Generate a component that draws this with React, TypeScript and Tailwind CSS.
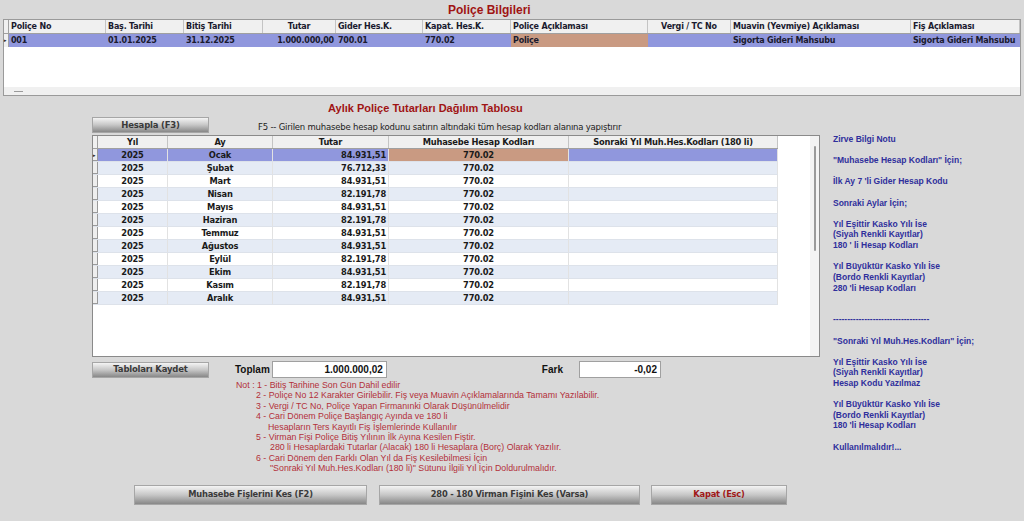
import React from 'react';

const tahoma = "font-['DejaVu_Sans',sans-serif]";
const arial = "font-['Liberation_Sans',Arial,sans-serif]";

const topCols = [
  { label: 'Poliçe No', w: 'w-[97px]', head: 'text-left', cell: 'text-left', value: '001', bg: 'bg-[#9097dd]' },
  { label: 'Baş. Tarihi', w: 'w-[78px]', head: 'text-left', cell: 'text-left', value: '01.01.2025', bg: 'bg-[#9097dd]' },
  { label: 'Bitiş Tarihi', w: 'w-[79px]', head: 'text-left', cell: 'text-left', value: '31.12.2025', bg: 'bg-[#9097dd]' },
  { label: 'Tutar', w: 'w-[73px]', head: 'text-center', cell: 'text-right', value: '1.000.000,00', bg: 'bg-[#9097dd]' },
  { label: 'Gider Hes.K.', w: 'w-[87px]', head: 'text-left', cell: 'text-left', value: '700.01', bg: 'bg-[#9097dd]' },
  { label: 'Kapat. Hes.K.', w: 'w-[88px]', head: 'text-left', cell: 'text-left', value: '770.02', bg: 'bg-[#9097dd]' },
  { label: 'Poliçe Açıklaması', w: 'w-[137px]', head: 'text-left', cell: 'text-left', value: 'Poliçe', bg: 'bg-[#c99a82]' },
  { label: 'Vergi / TC No', w: 'w-[83px]', head: 'text-center', cell: 'text-left', value: '', bg: 'bg-[#9097dd]' },
  { label: 'Muavin (Yevmiye) Açıklaması', w: 'w-[180px]', head: 'text-left', cell: 'text-left', value: 'Sigorta Gideri Mahsubu', bg: 'bg-[#9097dd]' },
  { label: 'Fiş Açıklaması', w: 'flex-1', head: 'text-left', cell: 'text-left', value: 'Sigorta Gideri Mahsubu', bg: 'bg-[#9097dd]' },
];

const months = [
  ['Ocak', '84.931,51'],
  ['Şubat', '76.712,33'],
  ['Mart', '84.931,51'],
  ['Nisan', '82.191,78'],
  ['Mayıs', '84.931,51'],
  ['Haziran', '82.191,78'],
  ['Temmuz', '84.931,51'],
  ['Ağustos', '84.931,51'],
  ['Eylül', '82.191,78'],
  ['Ekim', '84.931,51'],
  ['Kasım', '82.191,78'],
  ['Aralık', '84.931,51'],
];

const notes = [
  { text: 'Not : 1 - Bitiş Tarihine Son Gün Dahil edilir', pad: 'pl-0' },
  { text: '2 - Poliçe No 12 Karakter Girilebilir. Fiş veya Muavin Açıklamalarında Tamamı Yazılabilir.', pad: 'pl-[20px]' },
  { text: '3 - Vergi / TC No, Poliçe Yapan Firmanınki Olarak Düşünülmelidir', pad: 'pl-[20px]' },
  { text: '4 - Cari Dönem Poliçe Başlangıç Ayında ve 180 li', pad: 'pl-[20px]' },
  { text: 'Hesapların Ters Kayıtlı Fiş İşlemlerinde Kullanılır', pad: 'pl-[32px]' },
  { text: '5 - Virman Fişi Poliçe Bitiş Yılının İlk Ayına Kesilen Fiştir.', pad: 'pl-[20px]' },
  { text: '280 li Hesaplardaki Tutarlar (Alacak) 180 li Hesaplara (Borç) Olarak Yazılır.', pad: 'pl-[34px]' },
  { text: '6 - Cari Dönem den Farklı Olan Yıl da Fiş Kesilebilmesi İçin', pad: 'pl-[20px]' },
  { text: '"Sonraki Yıl Muh.Hes.Kodları (180 li)" Sütunu İlgili Yıl İçin Doldurulmalıdır.', pad: 'pl-[34px]' },
];

const info = [
  'Zirve Bilgi Notu',
  '',
  '"Muhasebe Hesap Kodları" İçin;',
  '',
  "İlk Ay 7 'li Gider Hesap Kodu",
  '',
  'Sonraki Aylar İçin;',
  '',
  'Yıl Eşittir Kasko Yılı İse',
  '(Siyah Renkli Kayıtlar)',
  "180 ' li Hesap Kodları",
  '',
  'Yıl Büyüktür Kasko Yılı İse',
  '(Bordo Renkli Kayıtlar)',
  "280 'li Hesap Kodları",
  '',
  '',
  '----------------------------------',
  '',
  '"Sonraki Yıl Muh.Hes.Kodları" İçin;',
  '',
  'Yıl Eşittir Kasko Yılı İse',
  '(Siyah Renkli Kayıtlar)',
  'Hesap Kodu Yazılmaz',
  '',
  'Yıl Büyüktür Kasko Yılı İse',
  '(Bordo Renkli Kayıtlar)',
  "180 'li Hesap Kodları",
  '',
  'Kullanılmalıdır!...',
];

function GrayButton({ label, className, red }: { label: string; className: string; red?: boolean }) {
  return (
    <button
      className={`${className} ${tahoma} flex items-center justify-center border border-[#a6a6a6] bg-gradient-to-b from-[#f4f4f4] via-[#c6c6c6] to-[#888888] font-bold tracking-[-0.2px] ${
        red ? 'text-[#a01818]' : 'text-[#3a3a3a]'
      }`}
    >
      {label}
    </button>
  );
}

export default function App() {
  return (
    <div className={`w-[1024px] h-[521px] overflow-hidden bg-[#d9d9d9] ${arial}`}>
      {/* header title */}
      <div className="h-[19px] pl-[448px] pt-[4px] text-[12px] leading-[13px] font-bold text-[#a01414]">
        Poliçe Bilgileri
      </div>

      {/* policy grid */}
      <div className={`mx-[3px] h-[77px] flex flex-col border border-[#9a9a9a] bg-white ${tahoma} text-[8px] font-bold tracking-[-0.2px] text-[#1a1a2e]`}>
        <div className="flex h-[14px] border-b border-[#a0a0a0] bg-[#f0f0f0]">
          <div className="w-[5px] border-r border-[#a0a0a0]" />
          {topCols.map((c) => (
            <div key={c.label} className={`${c.w} ${c.head} border-r border-[#c4c4c4] px-[2px] leading-[13px] whitespace-nowrap overflow-hidden`}>
              {c.label}
            </div>
          ))}
        </div>
        <div className="flex h-[13px]">
          <div className="w-[5px] border-r border-[#a0a0a0] bg-[#f0f0f0] text-[5px] leading-[13px] text-[#222]">▸</div>
          {topCols.map((c) => (
            <div key={c.label} className={`${c.w} ${c.cell} ${c.bg} px-[2px] leading-[13px] whitespace-nowrap overflow-hidden`}>
              {c.value}
            </div>
          ))}
        </div>
        <div className="flex-1" />
        <div className="h-[8px] bg-[#f0f0f0] flex items-center pl-[10px]">
          <div className="w-[9px] h-[1px] bg-[#9a9a9a]" />
        </div>
      </div>

      <div className="flex">
        {/* left column */}
        <div className="ml-[92px] w-[728px]">
          <div className="pl-[236px] pt-[6px] h-[21px] text-[11px] leading-[13px] font-bold text-[#a01414]">
            Aylık Poliçe Tutarları Dağılım Tablosu
          </div>
          <div className="flex items-center h-[16px]">
            <GrayButton label="Hesapla (F3)" className="w-[117px] h-[16px] text-[8.5px]" />
            <span className={`ml-[49px] mt-[4px] ${tahoma} text-[8.5px] tracking-[-0.2px] text-[#222] whitespace-nowrap`}>
              F5 -- Girilen muhasebe hesap kodunu satırın altındaki tüm hesap kodları alanına yapıştırır
            </span>
          </div>

          {/* monthly grid */}
          <div className={`mt-[2px] h-[222px] flex border border-[#8a8a8a] bg-white ${tahoma} text-[8.3px] font-bold tracking-[-0.2px] text-[#1a1a1a]`}>
            <div className="w-[685px] flex flex-col">
              <div className="flex h-[13px] border-b border-[#a0a0a0] bg-[#f0f0f0]">
                <div className="w-[5px] border-r border-[#a0a0a0]" />
                <div className="w-[70px] text-center border-r border-[#c4c4c4] leading-[12px]">Yıl</div>
                <div className="w-[105px] text-center border-r border-[#c4c4c4] leading-[12px]">Ay</div>
                <div className="w-[116px] text-center border-r border-[#c4c4c4] leading-[12px]">Tutar</div>
                <div className="w-[180px] text-center border-r border-[#c4c4c4] leading-[12px]">Muhasebe Hesap Kodları</div>
                <div className="flex-1 text-center border-r border-[#c4c4c4] leading-[12px]">Sonraki Yıl Muh.Hes.Kodları (180 li)</div>
              </div>
              {months.map(([ay, tutar], i) => {
                const sel = i === 0;
                const rowBg = sel ? 'bg-[#9097dd]' : i % 2 === 1 ? 'bg-[#e5ebf5]' : 'bg-white';
                return (
                  <div key={ay} className={`flex h-[13px] border-b border-[#dde2ea] ${rowBg}`}>
                    <div className="w-[5px] border-r border-b border-[#9a9a9a] bg-[#eeeeee] text-[5px] leading-[12px] text-[#222]">
                      {sel ? '▸' : ''}
                    </div>
                    <div className="w-[70px] text-center border-r border-[#e2e2e2] leading-[12px]">2025</div>
                    <div className="w-[105px] text-center border-r border-[#e2e2e2] leading-[12px]">{ay}</div>
                    <div className="w-[116px] text-right pr-[2px] border-r border-[#e2e2e2] leading-[12px]">{tutar}</div>
                    <div className={`w-[180px] text-center border-r border-[#e2e2e2] leading-[12px] ${sel ? 'bg-[#c99a82]' : ''}`}>770.02</div>
                    <div className="flex-1 border-r border-[#e2e2e2]" />
                  </div>
                );
              })}
            </div>
            <div className="flex-1" />
            <div className="w-[9px] bg-[#f3f3f3] flex justify-center pt-[10px]">
              <div className="w-[2px] h-[105px] rounded-full bg-[#9a9a9a]" />
            </div>
          </div>

          {/* totals row */}
          <div className="mt-[4px] flex items-center h-[17px]">
            <GrayButton label="Tabloları Kaydet" className="w-[117px] h-[16px] text-[8.5px]" />
            <span className="ml-[26px] text-[10px] font-bold text-[#111]">Toplam</span>
            <div className="ml-[2px] w-[115px] h-[17px] border border-[#a0a0a0] bg-white text-right pr-[3px] text-[10px] leading-[15px] font-bold text-[#111]">
              1.000.000,02
            </div>
            <span className="ml-[155px] text-[10px] font-bold text-[#111]">Fark</span>
            <div className="ml-[16px] w-[82px] h-[17px] border border-[#a0a0a0] bg-white text-right pr-[3px] text-[10px] leading-[15px] font-bold text-[#111]">
              -0,02
            </div>
          </div>

          {/* notes */}
          <div className="mt-[2px] ml-[144px] text-[8.8px] leading-[10.4px] text-[#b3303a]">
            {notes.map((n) => (
              <div key={n.text} className={`${n.pad} whitespace-nowrap`}>{n.text}</div>
            ))}
          </div>

          {/* bottom buttons */}
          <div className="mt-[11px] flex ml-[42px]">
            <GrayButton label="Muhasebe Fişlerini Kes (F2)" className="w-[233px] h-[20px] text-[8.3px]" />
            <GrayButton label="280 - 180 Virman Fişini Kes (Varsa)" className="ml-[12px] w-[261px] h-[20px] text-[8.3px]" />
            <GrayButton label="Kapat (Esc)" className="ml-[11px] w-[136px] h-[20px] text-[8.3px]" red />
          </div>
        </div>

        {/* info panel */}
        <div className="ml-[13px] pt-[38px] text-[8.5px] leading-[10.62px] font-bold text-[#2f2f9c]">
          {info.map((l, i) => (
            <div key={i} className="h-[10.62px] whitespace-nowrap">{l}</div>
          ))}
        </div>
      </div>
    </div>
  );
}
